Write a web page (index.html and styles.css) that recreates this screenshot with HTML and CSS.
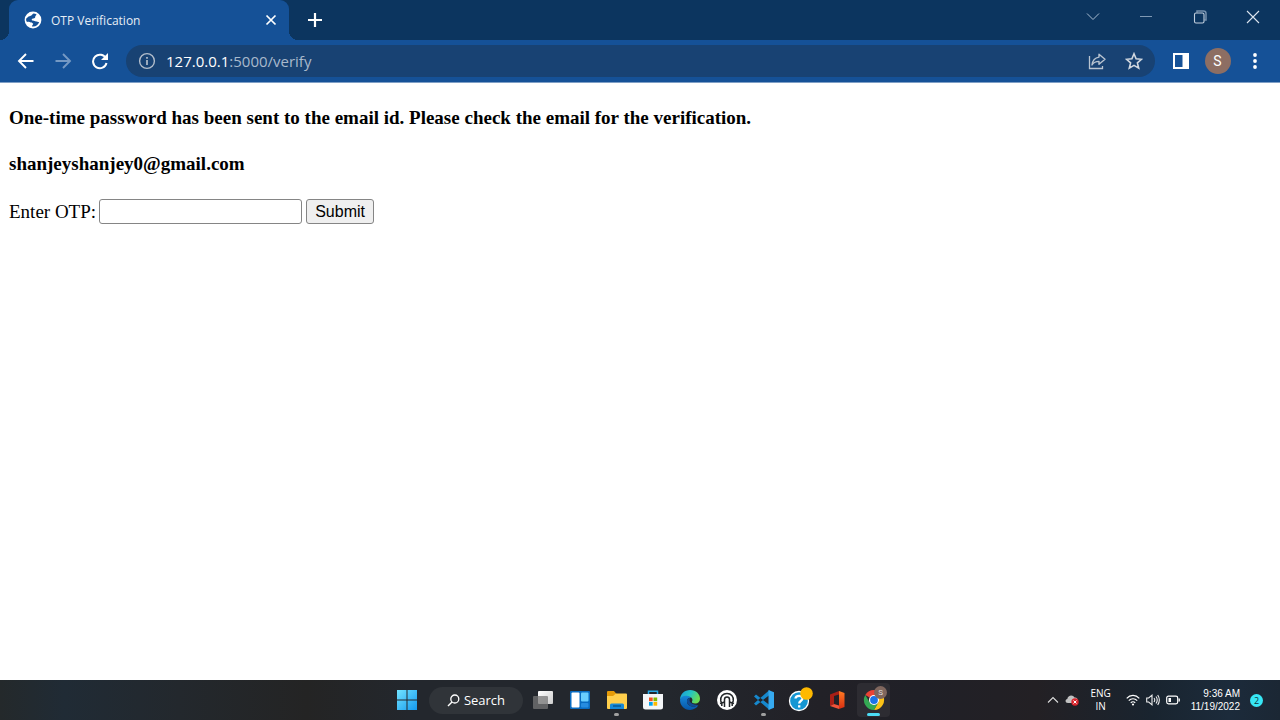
FILE: index.html
```html
<!DOCTYPE html>
<html lang="en">
<head>
<meta charset="utf-8">
<title>OTP Verification</title>
<link rel="stylesheet" href="styles.css">
</head>
<body>
<header class="browser">
  <div class="tabstrip">
    <div class="tab">
      <svg class="favicon" width="18" height="18" viewBox="0 0 18 18"><circle cx="9" cy="9" r="8.4" fill="#fff"/><path d="M9.500 2.500C8 3.500 7.500 5 5.500 5.200 4 5.500 3.500 6.500 2.300 7.500 1.800 9 2.300 10.200 3 11c1.500-.3 2.800-.2 3.800.4 1 .7 2.200.5 2.400 1.400.1.900-1.200 1.400-1.200 2.700 3.500.6 6.300-1.500 7.200-4.500-1.200.3-1.900-.6-3-.6-1.400 0-2-.7-3.300-.8-1.300 0-1.600-1-.8-1.700.8-.6 1.900-.2 2.700-.8.800-.7.100-1.600.8-2.300.5-.5.9-.8 1-1.200C11.700 2.900 10.600 2.500 9.500 2.500z" fill="#155197"/></svg>
      <span class="tab-title">OTP Verification</span>
      <button class="icon tab-close" aria-label="Close tab"><svg width="12" height="12" viewBox="0 0 12 12"><path d="M1.500 1.500l9 9m0-9l-9 9" stroke="#fff" stroke-width="1.700"/></svg></button>
    </div>
    <button class="icon new-tab" aria-label="New tab"><svg width="16" height="16" viewBox="0 0 16 16"><path d="M8 1v14M1 8h14" stroke="#fff" stroke-width="2.200"/></svg></button>
    <div class="window-controls">
      <button class="icon" aria-label="Search tabs"><svg width="14" height="14" viewBox="0 0 14 14"><path d="M1 3.500l6 6 6-6" fill="none" stroke="#a9bdd2"/></svg></button>
      <button class="icon" aria-label="Minimize"><svg width="14" height="14" viewBox="0 0 14 14"><path d="M1 6.500h12" stroke="#7f99b4"/></svg></button>
      <button class="icon" aria-label="Restore"><svg width="14" height="14" viewBox="0 0 14 14"><path d="M4 2.500V1h6.500Q13 1 13 3.500V10h-1.500" fill="none" stroke="#7590ad" stroke-width="1.500"/><rect x="1.500" y="3" width="9.500" height="10" rx="1.500" fill="none" stroke="#c3d0de" stroke-width="1.100"/></svg></button>
      <button class="icon" aria-label="Close"><svg width="14" height="14" viewBox="0 0 14 14"><path d="M1 1l12 12M13 1L1 13" stroke="#dce5ee" stroke-width="1.100"/></svg></button>
    </div>
  </div>
  <div class="toolbar">
    <button class="icon nav" aria-label="Back"><svg width="18" height="18" viewBox="0 0 18 18"><path d="M16.500 9H2.500M9 2L2 9l7 7" fill="none" stroke="#fff" stroke-width="1.900"/></svg></button>
    <button class="icon nav" aria-label="Forward"><svg width="18" height="18" viewBox="0 0 18 18"><path d="M1.500 9h14M9 2l7 7-7 7" fill="none" stroke="#7599c4" stroke-width="1.900"/></svg></button>
    <button class="icon nav" aria-label="Reload"><svg width="18" height="18" viewBox="0 0 18 18"><path d="M15 6.500A6.800 6.800 0 1 0 15.500 11" fill="none" stroke="#fff" stroke-width="2"/><path d="M17 1v7h-7z" fill="#fff"/></svg></button>
    <div class="omnibox">
      <svg width="18" height="18" viewBox="0 0 18 18"><circle cx="9" cy="9" r="7.400" fill="none" stroke="#b2bdcb" stroke-width="1.400"/><path d="M9 8v5M9 5v1.800" stroke="#b2bdcb" stroke-width="1.700"/></svg>
      <span class="url"><span class="host">127.0.0.1</span>:5000/verify</span>
      <button class="icon" aria-label="Share"><svg width="20" height="20" viewBox="0 0 20 20"><path d="M2.500 5v12.500h13V15" fill="none" stroke="#b9c4d1" stroke-width="1.300"/><path d="M12 3.300l6 5-6 4.900v-2.800c-3 0-5.300.9-7 3.600.5-4 2.700-7.300 7-7.900z" fill="none" stroke="#b9c4d1" stroke-width="1.400" stroke-linejoin="round"/></svg></button>
      <button class="icon" aria-label="Bookmark this tab"><svg width="18" height="18" viewBox="0 0 18 18"><path d="M9 1.800l2.100 5 5.400.5-4.100 3.600 1.300 5.300L9 13.400l-4.700 2.800 1.300-5.300-4.100-3.600 5.400-.5z" fill="none" stroke="#d0d7df" stroke-width="1.600"/></svg></button>
    </div>
    <button class="icon action" aria-label="Side panel"><svg width="18" height="18" viewBox="0 0 18 18"><path fill-rule="evenodd" d="M1 1h16v16H1zM3 3v12h7.500V3z" fill="#fff"/></svg></button>
    <button class="icon action" aria-label="Profile"><span class="avatar">S</span></button>
    <button class="icon action" aria-label="Menu"><svg width="6" height="18" viewBox="0 0 6 18"><g fill="#fff"><circle cx="3" cy="3" r="1.900"/><circle cx="3" cy="9" r="1.900"/><circle cx="3" cy="15" r="1.900"/></g></svg></button>
  </div>
</header>
<main class="page">
  <h3>One-time password has been sent to the email id. Please check the email for the verification.</h3>
  <h3>shanjeyshanjey0@gmail.com</h3>
  <form class="otp-form">
    <label for="otp">Enter OTP:</label>
    <input id="otp" class="otp" type="text">
    <button class="submit" type="submit">Submit</button>
  </form>
</main>
<footer class="taskbar">
  <div class="dock">
    <button class="icon start" aria-label="Start"><svg width="20" height="20" viewBox="0 0 20 20"><defs><linearGradient id="win" x2="1" y2="1"><stop stop-color="#72e3ff"/><stop offset="1" stop-color="#1499ee"/></linearGradient></defs><path d="M0 0h9.500v9.500H0zM10.500 0H20v9.500h-9.500zM0 10.500h9.500V20H0zM10.500 10.500H20V20h-9.500z" fill="url(#win)"/></svg></button>
    <button class="search"><svg width="13" height="13" viewBox="0 0 13 13"><circle cx="7.800" cy="5" r="4" fill="none" stroke="#fff" stroke-width="1.300"/><path d="M5 8l-4 4" stroke="#fff" stroke-width="1.500"/></svg>Search</button>
    <div class="apps">
      <button class="icon app" aria-label="Task view"><svg width="22" height="22" viewBox="0 0 22 22"><defs><linearGradient id="tv" x2="1" y2="1"><stop stop-color="#fff"/><stop offset="1" stop-color="#ccc"/></linearGradient></defs><rect x="6" y="2" width="15" height="13" rx="1" fill="url(#tv)"/><rect x="1" y="7" width="15" height="13" rx="1" fill="#777" fill-opacity=".75"/></svg></button>
      <button class="icon app" aria-label="Widgets"><svg width="22" height="22" viewBox="0 0 22 22"><rect x="1" y="2" width="20" height="18" rx="1" fill="#086bc1"/><rect x="2.500" y="3.500" width="8" height="15" rx="1" fill="#fff"/><rect x="12" y="3.500" width="7.500" height="9" rx="1" fill="#69ceff"/><rect x="12" y="14" width="7.500" height="4.500" rx="1" fill="#268ce0"/></svg></button>
      <button class="icon app running" aria-label="File Explorer"><svg width="22" height="22" viewBox="0 0 22 22"><path d="M1 3q0-1 1-1h6l2.500 3L8 8H1z" fill="#e59b08"/><path d="M1 7h6l3-2.500h10q1 0 1 1V19q0 1-1 1H2q-1 0-1-1z" fill="#ffcf4c"/><path d="M4 20v-4q0-1.500 1.500-1.500h11Q18 14.500 18 16v4z" fill="#1689d8"/><path d="M7 17h8" stroke="#075894" stroke-width="1.500"/></svg></button>
      <button class="icon app" aria-label="Microsoft Store"><svg width="22" height="22" viewBox="0 0 22 22"><path d="M6.500 6V2.200h9V6" fill="none" stroke="#27a9e6" stroke-width="1.500"/><path d="M1 5h20v13q0 2.500-2.500 2.500h-15Q1 20.500 1 18z" fill="#f4f6f8"/><path d="M7 8.500h3.700v3.700H7z" fill="#f25022"/><path d="M11.500 8.500h3.700v3.700h-3.700z" fill="#7fba00"/><path d="M7 13h3.700v3.700H7z" fill="#00a4ef"/><path d="M11.500 13h3.700v3.700h-3.700z" fill="#ffb900"/></svg></button>
      <button class="icon app" aria-label="Edge"><svg width="22" height="22" viewBox="0 0 22 22"><defs><linearGradient id="edge" x2="1" y2=".4"><stop stop-color="#1897df"/><stop offset=".55" stop-color="#25c5c2"/><stop offset="1" stop-color="#69dc55"/></linearGradient><linearGradient id="sea" x2="0" y2="1"><stop stop-color="#1687d9"/><stop offset="1" stop-color="#0755a7"/></linearGradient></defs><path d="M1 11C1 5 5.500 1 11.200 1 17 1 21 5 21 9.700c0 3-2 4.800-4.700 4.800-2.300 0-3.900-.9-3.300-2 1.300-1.800-.2-4.700-3.200-4.700C6 7.800 2 8.400 1 11z" fill="url(#edge)"/><path d="M1 11c.4-3 3.500-4.500 6.800-4.200 2 .2 3.500 1 4.200 2C9 8.300 7.700 10.500 8 13c.4 3.200 4 5 7.500 4.500 1.800-.2 3.200-1 3.800-1.200C17.700 19 14.700 21 11 21 5.200 21 1 16.600 1 11z" fill="url(#sea)"/><path d="M8 13c-.4-2.200.6-4 3.200-4.100-1 1.700-.8 3.500.6 4.800 1.900 1.600 4.900 1.900 7.500 2.600C16 18.300 9 18 8 13z" fill="#104b94"/></svg></button>
      <button class="icon app" aria-label="Assistant"><svg width="22" height="22" viewBox="0 0 22 22"><circle cx="11" cy="11" r="10" fill="#fff"/><path d="M5.800 17v-2.500L4.800 12C4 7.500 7 4.500 11 4.500s7 3 6.200 7.500l-1 2.500V17M8.500 18v-7.500Q8.500 8 11 8t2.500 2.500V18M4 14.500l4.500-1.500m9.500 1.500L13.500 13" fill="none" stroke="#222629" stroke-width="1.500"/></svg></button>
      <button class="icon app running" aria-label="Visual Studio Code"><svg width="22" height="22" viewBox="0 0 22 22"><path d="M1 7.500l2-2L16.500 16v5zM1 14.500l2 2L16.500 6V1z" fill="#1688cd"/><path d="M15.500 1L21 3.300v15.400L15.500 21z" fill="#36a9ef"/></svg></button>
      <button class="icon app" aria-label="Help"><svg width="26" height="26" viewBox="0 0 26 26"><circle cx="12" cy="14" r="9.500" fill="#1496d3" stroke="#fff" stroke-width="1.300"/><path d="M8.500 11.500c.2-3.300 7-3.800 7 0 0 2.300-3.300 2.200-3.300 5M12.200 18.300v2.300" fill="none" stroke="#fff" stroke-width="2.300"/><circle cx="19.500" cy="6.500" r="6.300" fill="#ffb900"/></svg></button>
      <button class="icon app" aria-label="Office"><svg width="22" height="22" viewBox="0 0 22 22"><defs><linearGradient id="off" x2="0" y2="1"><stop stop-color="#ff7a22"/><stop offset="1" stop-color="#d72e12"/></linearGradient></defs><path d="M4 5.500L13 2v3.500L8 7v8l-4 2z" fill="#a91f16"/><path d="M13 2l5.500 2v14L13 20z" fill="url(#off)"/><path d="M4 17l4-2 5 1.500V20z" fill="#f0533a"/></svg></button>
      <button class="icon app active" aria-label="Chrome"><svg width="24" height="24" viewBox="0 0 24 24"><path d="M12 12L3.300 7A10 10 0 0 1 20.700 7z" fill="#ea4335"/><path d="M12 7h8.700A10 10 0 0 1 12 22l4.500-8z" fill="#fbc116"/><path d="M3.300 7l4.400 7.500L12 17l4-2-4 7A10 10 0 0 1 3.300 7z" fill="#34a853"/><circle cx="12" cy="12" r="5" fill="#fff"/><circle cx="12" cy="12" r="3.900" fill="#1a73e8"/></svg><span class="profile-badge">S</span></button>
    </div>
  </div>
  <div class="tray">
    <svg width="12" height="12" viewBox="0 0 12 12"><path d="M1 8.500l5-5 5 5" fill="none" stroke="#ddd" stroke-width="1.100"/></svg>
    <svg class="cloud" width="14" height="12" viewBox="0 0 14 12"><path d="M3 9C0 9-.2 5.500 2.300 5 2.700 1 8 .2 9.500 3.500 12 3.200 13 5 12.500 7L9 9z" fill="#c1c1c1"/><circle cx="10" cy="8" r="3.700" fill="#d9262e"/><path d="M8.500 6.500l3 3m0-3l-3 3" stroke="#fff"/></svg>
    <div class="lang">ENG<br>IN</div>
    <div class="status">
      <svg width="14" height="12" viewBox="0 0 14 12"><path d="M.7 4.300c3.500-3.800 9.100-3.800 12.600 0M2.800 6.600c2.300-2.500 6.100-2.500 8.400 0M4.800 8.800c1.200-1.400 3.200-1.400 4.400 0" fill="none" stroke="#fff" stroke-width="1.200"/><circle cx="7" cy="10.500" r="1.100" fill="#fff"/></svg>
      <svg width="14" height="12" viewBox="0 0 14 12"><path d="M.7 4h2L6 1.200v9.600L2.700 8h-2zM8 4q1.500 2 0 4M10 2.500q2.500 3.500 0 7M11.700 1q3.300 5 0 10" fill="none" stroke="#eee" stroke-width="1.100"/></svg>
      <svg width="14" height="12" viewBox="0 0 14 12"><rect x=".7" y="2.200" width="11" height="7.600" rx="1.800" fill="none" stroke="#fff" stroke-width="1.200"/><path d="M2.500 4H5v4H2.500z" fill="#fff"/><path d="M13.200 4.500v3" stroke="#fff" stroke-width="1.300"/></svg>
    </div>
    <div class="clock">9:36 AM<br>11/19/2022</div>
    <span class="count">2</span>
  </div>
</footer>
</body>
</html>
```
FILE: styles.css
```css
* { box-sizing: border-box; }
body {
  margin: 0;
  min-height: 100vh;
  display: flex;
  flex-direction: column;
  background: #fff;
  font-family: "Open Sans", "Noto Sans", sans-serif;
}
svg { display: block; flex: none; }
button { font-family: inherit; }
.icon {
  display: flex;
  align-items: center;
  justify-content: center;
  padding: 0;
  border: 0;
  background: none;
  color: #fff;
}

.tabstrip {
  display: flex;
  height: 40px;
  padding-left: 9px;
  background: #0c355f;
}
.tab {
  position: relative;
  display: flex;
  align-items: center;
  width: 280px;
  padding: 0 12px 0 15px;
  border-radius: 9px 9px 0 0;
  background: #155197;
  color: #e6edf5;
  font-size: 12px;
}
.tab::before,
.tab::after {
  content: "";
  position: absolute;
  bottom: 0;
  width: 9px;
  height: 9px;
}
.tab::before {
  right: 100%;
  background: radial-gradient(circle at 0 0, transparent 9px, #155197 9px);
}
.tab::after {
  left: 100%;
  background: radial-gradient(circle at 100% 0, transparent 9px, #155197 9px);
}
.tab-title { flex: 1; margin-left: 9px; }
.new-tab { width: 52px; }
.window-controls {
  display: grid;
  grid-template-columns: repeat(4, 1fr);
  width: 214px;
  height: 34px;
  margin-left: auto;
}

.toolbar {
  display: flex;
  align-items: center;
  height: 43px;
  padding: 0 7px;
  border-bottom: 1px solid #7f9fc6;
  background: #155197;
}
.nav { width: 37px; height: 32px; }
.action { width: 37px; height: 32px; }
.omnibox {
  display: flex;
  flex: 1;
  align-items: center;
  gap: 18px;
  height: 32px;
  margin: 0 7px 0 8px;
  padding: 0 12px;
  border-radius: 16px;
  background: #184273;
}
.url {
  flex: 1;
  margin-left: -8px;
  color: #a9b9cc;
  font-size: 15px;
}
.host { color: #fff; }
.avatar {
  width: 26px;
  height: 26px;
  border-radius: 50%;
  background: #8d6e63;
  font: 14px/26px Roboto, sans-serif;
}

.page {
  flex: 1;
  padding: 24px 9px;
  color: #000;
  font: 19px/22px "Liberation Serif", serif;
}
.page h3 { margin: 0 0 24px; font-size: 19px; }
.otp-form { display: flex; align-items: center; }
.otp {
  width: 203px;
  height: 25px;
  margin: 0 4px 0 3px;
  padding: 1px 2px;
  border: 1px solid #858585;
  border-radius: 3px;
  background: #fff;
  font: 16px "Liberation Sans", sans-serif;
}
.submit {
  width: 68px;
  height: 25px;
  padding: 0;
  border: 1px solid #858585;
  border-radius: 3px;
  background: #efefef;
  color: #000;
  font: 16px "Liberation Sans", sans-serif;
}

.taskbar {
  display: grid;
  grid-template-columns: 1fr auto 1fr;
  height: 40px;
  background: linear-gradient(90deg, #24292b 0, #202b35 5%, #23282d 14%, #242424 24%, #23272d 32%, #23272d 52%, #222127 64%, #202027 72%, #232024 81%, #19242f 90%, #1c2b3b 96%, #1b2734 100%);
  color: #fff;
}
.dock {
  display: flex;
  grid-column: 2;
  align-items: center;
  padding-left: 2px;
}
.start { width: 34px; height: 34px; }
.search {
  display: flex;
  align-items: center;
  justify-content: center;
  gap: 4px;
  width: 94px;
  height: 27px;
  margin: 0 2px 0 5px;
  padding: 0;
  border: 0;
  border-radius: 14px;
  background: #303439;
  color: #fff;
  font-size: 13px;
}
.apps {
  display: grid;
  grid-template-columns: repeat(10, 1fr);
  width: 367px;
}
.app {
  position: relative;
  height: 34px;
  border-radius: 4px;
}
.running::after,
.active::after {
  content: "";
  position: absolute;
  bottom: 1px;
  width: 5px;
  height: 3px;
  border-radius: 2px;
  background: #a0a0a0;
}
.active { margin: 0 2px; background: #2d2c32; }
.active::after { width: 13px; background: #4cdcf5; }
.profile-badge {
  position: absolute;
  top: 3px;
  right: 3px;
  width: 13px;
  height: 13px;
  border-radius: 50%;
  background: #80675e;
  color: #ddd;
  font: 8px/13px Roboto, sans-serif;
}
.tray {
  display: flex;
  align-items: center;
  justify-content: flex-end;
  padding-right: 17px;
  font-size: 10px;
  line-height: 13px;
}
.cloud { margin-left: 6px; }
.lang {
  width: 22px;
  margin: 0 14px 0 11px;
  text-align: center;
}
.status { display: flex; gap: 6px; }
.clock {
  margin: 0 10px 0 11px;
  font-family: "Liberation Sans", sans-serif;
  text-align: right;
}
.count {
  width: 13px;
  height: 13px;
  border-radius: 50%;
  background: #37e7f5;
  color: #12313a;
  font-size: 9px;
  text-align: center;
}
```
